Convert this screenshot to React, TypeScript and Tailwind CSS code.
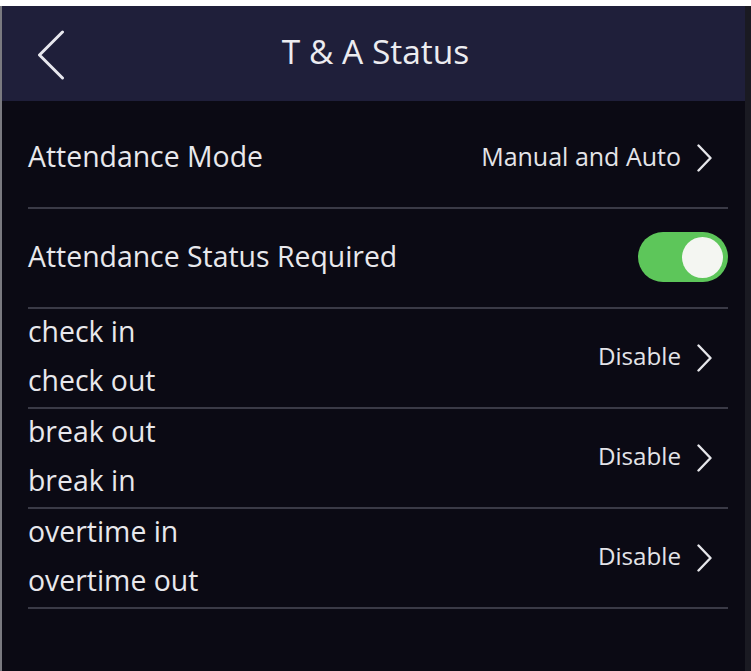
import React from "react";

function Chevron({ className }: { className?: string }) {
  return (
    <svg className={className} viewBox="0 0 15 28" fill="none">
      <path d="M1.5 1.5 L13.5 14 L1.5 26.5" stroke="#e6e6ea" strokeWidth="2.4" strokeLinecap="round" strokeLinejoin="round" />
    </svg>
  );
}

function ValueCell({ value, size }: { value: string; size: "lg" | "sm" }) {
  return (
    <div className="flex items-center gap-[16px] pr-[16px]">
      <span className={size === "lg" ? "text-[25px] text-[#e4e4e8] mt-[-3px]" : "text-[24.2px] text-[#e4e4e8] mt-[-3px]"}>{value}</span>
      <Chevron className="w-[15px] h-[28px]" />
    </div>
  );
}

export default function App() {
  const pairs: [string, string][] = [
    ["check in", "check out"],
    ["break out", "break in"],
    ["overtime in", "overtime out"],
  ];
  return (
    <div
      className="w-[751px] h-[671px] bg-white pt-[6px] overflow-hidden"
      style={{ fontFamily: '"Open Sans", "Noto Sans", sans-serif' }}
    >
      <div className="h-[665px] flex flex-col border-l-[2px] border-l-[#7a7a80] border-r-[6px] border-r-[#1a1a22] bg-[#0b0a14]">
        <div className="relative h-[95px] shrink-0 bg-[#1f1f3a] flex items-center justify-center">
          <svg className="absolute left-[35px] top-[24px] w-[28px] h-[50px]" viewBox="0 0 28 50" fill="none">
            <path d="M25.5 2 L2.5 25 L25.5 48" stroke="#e8e8ee" strokeWidth="3" strokeLinecap="round" strokeLinejoin="round" />
          </svg>
          <span className="text-[33.5px] text-[#ececf0] mt-[-4px] ml-[4px]">T &amp; A Status</span>
        </div>
        <div className="flex flex-col pl-[26px] pr-[17px] pt-[8px]">
          <div className="h-[100px] flex items-center justify-between border-b-2 border-[#3a3a46]">
            <span className="text-[28.4px] text-[#e8e8ec] mt-[-3px]">Attendance Mode</span>
            <ValueCell value="Manual and Auto" size="lg" />
          </div>
          <div className="h-[100px] flex items-center justify-between border-b-2 border-[#3a3a46]">
            <span className="text-[28.4px] text-[#e8e8ec] mt-[-3px]">Attendance Status Required</span>
            <div className="w-[90px] h-[50px] rounded-full bg-[#5dc65a] flex items-center justify-end pr-[5px] mt-[-2px]">
              <div className="w-[41px] h-[41px] rounded-full bg-[#f4f6f2]" />
            </div>
          </div>
          {pairs.map(([a, b]) => (
            <div key={a} className="h-[100px] flex items-center justify-between border-b-2 border-[#3a3a46]">
              <div className="flex flex-col mt-[-4px]">
                <span className="text-[28.4px] leading-[49px] text-[#e8e8ec]">{a}</span>
                <span className="text-[28.4px] leading-[49px] text-[#e8e8ec]">{b}</span>
              </div>
              <ValueCell value="Disable" size="sm" />
            </div>
          ))}
        </div>
      </div>
    </div>
  );
}
